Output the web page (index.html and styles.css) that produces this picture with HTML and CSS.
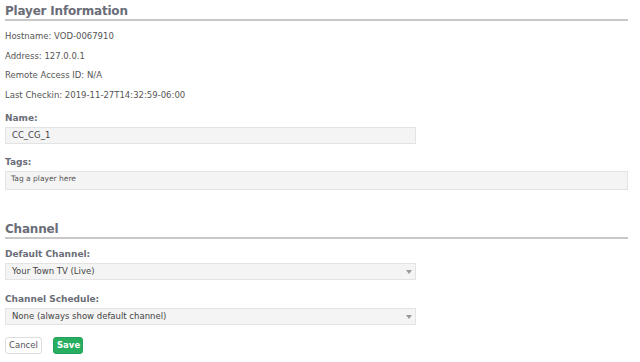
FILE: index.html
```html
<!DOCTYPE html>
<html>
<head>
<meta charset="utf-8">
<link rel="stylesheet" href="styles.css">
</head>
<body>
<div class="page">
  <h2 class="section-title">Player Information</h2>
  <p class="info">Hostname: VOD-0067910</p>
  <p class="info">Address: 127.0.0.1</p>
  <p class="info">Remote Access ID: N/A</p>
  <p class="info">Last Checkin: 2019-11-27T14:32:59-06:00</p>

  <div class="field first">
    <label class="label">Name:</label>
    <div class="input short">CC_CG_1</div>
  </div>
  <div class="field tight">
    <label class="label">Tags:</label>
    <div class="input tags">Tag a player here</div>
  </div>

  <h2 class="section-title channel">Channel</h2>
  <div class="field first-after-title">
    <label class="label">Default Channel:</label>
    <div class="input short select">Your Town TV (Live)<span class="caret"></span></div>
  </div>
  <div class="field">
    <label class="label">Channel Schedule:</label>
    <div class="input short select">None (always show default channel)<span class="caret"></span></div>
  </div>

  <div class="actions">
    <button class="btn cancel">Cancel</button>
    <button class="btn save">Save</button>
  </div>
</div>
</body>
</html>
```

FILE: styles.css
```css
html, body { margin: 0; padding: 0; background: #fff; }
body { font-family: "DejaVu Sans", Verdana, sans-serif; color: #555; font-size: 8.5px; }
.page { padding: 4px 12px 0 5px; }
.section-title {
  margin: 0;
  font-size: 12px;
  letter-spacing: -0.2px;
  font-weight: bold;
  color: #6a6d77;
  padding-bottom: 0;
  border-bottom: 2px solid #c8c8c8;
  line-height: 15px;
}
.section-title.channel { margin-top: 32px; }
.info { margin: 0; line-height: 19.5px; }
.info:first-of-type { margin-top: 6px; }
.field { display: flex; flex-direction: column; margin-top: 13px; }
.field.tight { margin-top: 12px; }
.field.first { margin-top: 7px; }
.field.first-after-title { margin-top: 9px; }
.label { font-weight: bold; color: #6a6d77; font-size: 9px; line-height: 12px; margin-bottom: 3px; }
.input {
  box-sizing: border-box;
  background: #f4f4f4;
  border: 1px solid #e3e3e3;
  color: #444;
  padding: 0 6px;
  height: 17px;
  line-height: 15px;
  position: relative;
}
.input.short { width: 411px; }
.input.tags { height: 19px; font-size: 7.5px; line-height: 14px; padding-left: 5px; color: #555; }
.input.select { padding-left: 6px; height: 17px; line-height: 15px; }
.caret {
  position: absolute; right: 3px; top: 6px;
  width: 0; height: 0;
  border-left: 3px solid transparent; border-right: 3px solid transparent;
  border-top: 4px solid #999;
}
.actions { display: flex; gap: 11px; margin-top: 12px; }
.btn {
  font-family: "DejaVu Sans", Verdana, sans-serif;
  font-size: 8.5px;
  height: 17px;
  padding: 0 3px;
  border-radius: 3px;
  line-height: 15px;
}
.btn.cancel { background: #fff; border: 1px solid #ddd; color: #555; width: 37px; }
.btn.save { background: #27ae60; border: 1px solid #23a05a; color: #fff; font-weight: 600; width: 30px; }
```
